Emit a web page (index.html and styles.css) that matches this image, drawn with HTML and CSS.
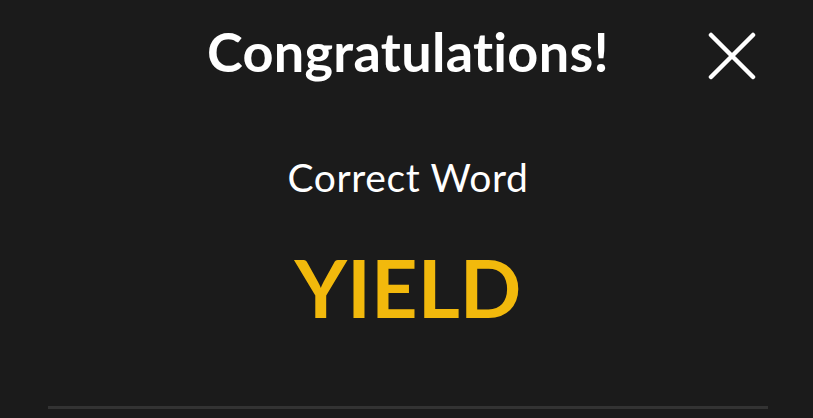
FILE: index.html
```html
<!DOCTYPE html>
<html lang="en">
<head>
    <meta charset="UTF-8">
    <meta name="viewport" content="width=device-width, initial-scale=1.0">
    <title>Congratulations</title>
    <link rel="stylesheet" href="styles.css">
</head>
<body>
    <div class="modal">
        <header class="modal-header">
            <h1>Congratulations!</h1>
            <button class="close" aria-label="Close">
                <svg width="48" height="48" viewBox="0 0 48 48">
                    <path d="M3 3 L45 45 M45 3 L3 45" stroke="#fff" stroke-width="4.5" stroke-linecap="round" fill="none"/>
                </svg>
            </button>
        </header>

        <div class="result">
            <p class="label">Correct Word</p>
            <p class="word">YIELD</p>
        </div>

        <hr class="divider">
    </div>
</body>
</html>
```

FILE: styles.css
```css
body {
    font-family: Lato, "Open Sans", sans-serif;
    font-variant-ligatures: none;
    background-color: #1b1b1b;
    color: white;
    margin: 0;
    padding: 0;
}
.modal {
    padding: 0 45px 0 48px;
}
.modal-header {
    position: relative;
    display: flex;
    justify-content: center;
    padding-top: 22px;
}
h1 {
    margin: 0;
    font-size: 54px;
    font-weight: 700;
    line-height: 60px;
    letter-spacing: 0.3px;
}
.close {
    position: absolute;
    top: 32px;
    right: 12px;
    padding: 0;
    border: none;
    background: none;
    cursor: pointer;
    line-height: 0;
}
.result {
    text-align: center;
    padding-top: 73px;
}
.label {
    margin: 0;
    font-size: 39px;
    line-height: 44px;
    letter-spacing: 0.6px;
}
.word {
    margin: 44px 0 0;
    font-size: 81px;
    font-weight: 700;
    line-height: 88px;
    color: #f2b90c;
}
.divider {
    margin: 75px 0 0;
    border: none;
    height: 3px;
    background-color: #333;
}
```
